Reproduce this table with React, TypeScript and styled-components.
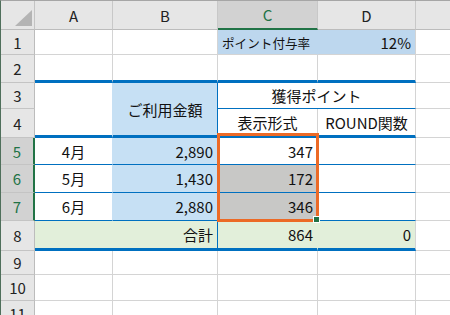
import React from 'react';
import styled, { createGlobalStyle } from 'styled-components';

const GRID = '#d4d4d4';
const BLUE = '#0070c0';
const FILL_B = '#c6e0f4';
const FILL_RATE = '#bdd7ee';
const FILL_SUM = '#e2efda';
const SELECTED = '#c8c8c6';
const EXCEL_GREEN = '#217346';
const thick = `3px solid ${BLUE}`;
const thin = `1px solid ${BLUE}`;

const GlobalStyle = createGlobalStyle`
    html, body {
        margin: 0;
        padding: 0;
        overflow: hidden;
        background: #fff;
    }
    body {
        font-family: 'Noto Sans CJK JP', 'Noto Sans', sans-serif;
        color: #111;
    }
`;

const Frame = styled.div`
    position: relative;
    width: 450px;
    height: 315px;
    box-sizing: border-box;
    overflow: hidden;
    border-left: 1px solid #4f6f5b;
    border-top: 1px solid #a6a6a6;
`;

const Sheet = styled.div`
    display: grid;
    grid-template-columns: 34px 78px 105px 100px 98px 1fr;
    grid-template-rows: 29px 25px 28px 26px 29px 27px 28px 28px 30px 24px 26px 26px;
`;

const Corner = styled.div`
    box-sizing: border-box;
    background: #e6e6e6;
    border-right: 1px solid #c4c4c4;
    border-bottom: 1px solid #bcbcbc;
`;

const ColHead = styled.div<{ $sel?: boolean; $last?: boolean }>`
    box-sizing: border-box;
    display: flex;
    align-items: center;
    justify-content: center;
    font-size: 15px;
    background: ${p => (p.$sel ? '#d2d2d2' : '#e6e6e6')};
    color: ${p => (p.$sel ? EXCEL_GREEN : '#222')};
    border-right: ${p => (p.$last ? 'none' : '1px solid #c8c8c8')};
    border-bottom: ${p => (p.$sel ? `2px solid ${EXCEL_GREEN}` : '1px solid #bcbcbc')};
`;

const RowHead = styled.div<{ $sel?: boolean }>`
    box-sizing: border-box;
    display: flex;
    align-items: center;
    justify-content: center;
    font-size: 15px;
    background: ${p => (p.$sel ? '#d2d2d2' : '#e6e6e6')};
    color: ${p => (p.$sel ? EXCEL_GREEN : '#222')};
    border-right: ${p => (p.$sel ? `2px solid ${EXCEL_GREEN}` : '1px solid #bcbcbc')};
    border-bottom: 1px solid #c4c4c4;
`;

type CellProps = {
    $fill?: string;
    $align?: 'left' | 'center' | 'right';
    $right?: string;
    $bottom?: string;
    $cols?: number;
    $rows?: number;
    $small?: boolean;
};

const Cell = styled.div<CellProps>`
    box-sizing: border-box;
    display: flex;
    align-items: center;
    justify-content: ${p =>
        p.$align === 'right' ? 'flex-end' : p.$align === 'center' ? 'center' : 'flex-start'};
    padding: 0 4px;
    background: ${p => p.$fill || '#fff'};
    border-right: ${p => p.$right || `1px solid ${GRID}`};
    border-bottom: ${p => p.$bottom || `1px solid ${GRID}`};
    grid-column: span ${p => p.$cols || 1};
    grid-row: span ${p => p.$rows || 1};
    font-size: ${p => (p.$small ? '12.6px' : '15px')};
    white-space: nowrap;
    overflow: hidden;
`;

const Selection = styled.div`
    position: absolute;
    left: 216px;
    top: 132px;
    width: 102px;
    height: 89px;
    box-sizing: border-box;
    border: 3px solid #ec6a26;
    pointer-events: none;
`;

const FillHandle = styled.div`
    position: absolute;
    right: -4px;
    bottom: -4px;
    width: 5px;
    height: 5px;
    background: ${EXCEL_GREEN};
    border: 1px solid #fff;
`;

const CornerMark = () => (
    <svg width="34" height="29" viewBox="0 0 34 29">
        <polygon points="14,25 31,25 31,9" fill="#b4b4b4" />
    </svg>
);

const months = [
    { label: '4月', amount: '2,890', point: '347', active: true },
    { label: '5月', amount: '1,430', point: '172', active: false },
    { label: '6月', amount: '2,880', point: '346', active: false },
];

export default function App() {
    return (
        <>
            <GlobalStyle />
            <Frame>
                <Sheet>
                    <Corner><CornerMark /></Corner>
                    <ColHead>A</ColHead>
                    <ColHead>B</ColHead>
                    <ColHead $sel>C</ColHead>
                    <ColHead>D</ColHead>
                    <ColHead $last />

                    {/* row 1 */}
                    <RowHead>1</RowHead>
                    <Cell />
                    <Cell />
                    <Cell $fill={FILL_RATE} $right={`1px solid ${FILL_RATE}`} $small>ポイント付与率</Cell>
                    <Cell $fill={FILL_RATE} $align="right">12%</Cell>
                    <Cell $right="none" />

                    {/* row 2 */}
                    <RowHead>2</RowHead>
                    <Cell $bottom={thick} />
                    <Cell $bottom={thick} />
                    <Cell $bottom={thick} />
                    <Cell $bottom={thick} />
                    <Cell $right="none" />

                    {/* row 3 - 4 */}
                    <RowHead>3</RowHead>
                    <Cell $rows={2} $right={`1px solid ${FILL_B}`} $bottom={thick} />
                    <Cell $rows={2} $fill={FILL_B} $align="center" $right={thin} $bottom={thick}>ご利用金額</Cell>
                    <Cell $cols={2} $align="center" $bottom={thin}>獲得ポイント</Cell>
                    <Cell $right="none" />
                    <RowHead>4</RowHead>
                    <Cell $align="center" $bottom={thick}>表示形式</Cell>
                    <Cell $align="center" $bottom={thick}>ROUND関数</Cell>
                    <Cell $right="none" />

                    {/* rows 5 - 7 */}
                    {months.map((m, i) => (
                        <React.Fragment key={i}>
                            <RowHead $sel>{i + 5}</RowHead>
                            <Cell $align="center" $right={`1px solid ${FILL_B}`} $bottom={thin}>{m.label}</Cell>
                            <Cell $fill={FILL_B} $align="right" $right={thin} $bottom={thin}>{m.amount}</Cell>
                            <Cell $fill={m.active ? '#fff' : SELECTED} $align="right" $bottom={thin}>{m.point}</Cell>
                            <Cell $bottom={thin} />
                            <Cell $right="none" />
                        </React.Fragment>
                    ))}

                    {/* row 8 */}
                    <RowHead>8</RowHead>
                    <Cell $cols={2} $fill={FILL_SUM} $align="right" $right={thin} $bottom={thick}>合計</Cell>
                    <Cell $fill={FILL_SUM} $align="right" $right={`1px solid ${FILL_SUM}`} $bottom={thick}>864</Cell>
                    <Cell $fill={FILL_SUM} $align="right" $bottom={thick}>0</Cell>
                    <Cell $right="none" />

                    {[9, 10, 11].map(n => (
                        <React.Fragment key={n}>
                            <RowHead>{n}</RowHead>
                            <Cell />
                            <Cell />
                            <Cell />
                            <Cell />
                            <Cell $right="none" />
                        </React.Fragment>
                    ))}
                </Sheet>
                <Selection>
                    <FillHandle />
                </Selection>
            </Frame>
        </>
    );
}
